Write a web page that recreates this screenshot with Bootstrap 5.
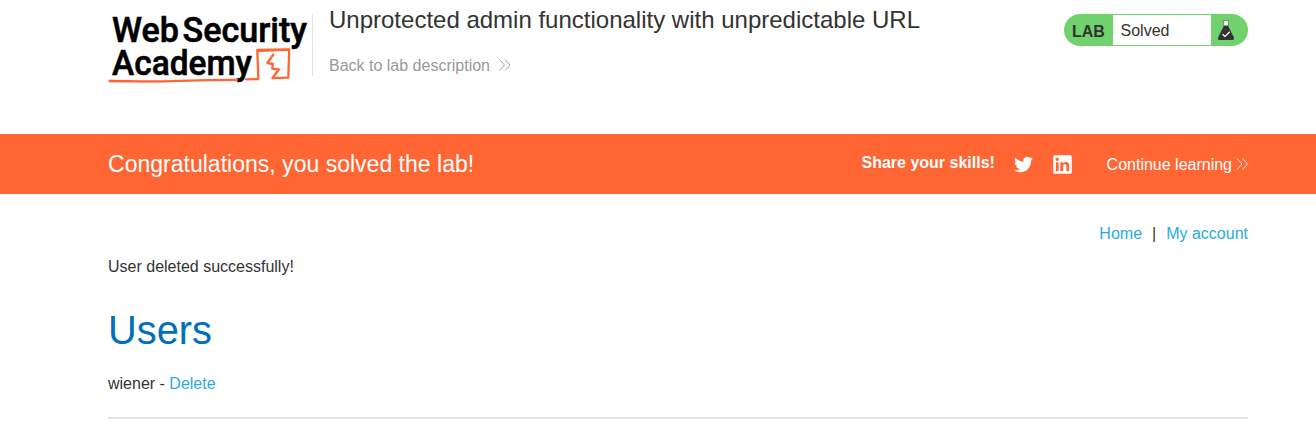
<!DOCTYPE html>
<html lang="en">
<head>
<meta charset="utf-8">
<meta name="viewport" content="width=device-width, initial-scale=1">
<title>Unprotected admin functionality with unpredictable URL</title>
<link href="https://cdn.jsdelivr.net/npm/bootstrap@5.3.0/dist/css/bootstrap.min.css" rel="stylesheet">
<style>
body{font-family:"Liberation Sans",Arial,sans-serif;font-size:16px;line-height:24px;color:#333332;overflow:hidden}
a{color:#29abe2;text-decoration:none}
.page-wrap{width:1140px;margin-left:108px}
.lab-header{height:134px}
.logo{width:204px;height:76px;margin-top:14px}
.logo svg{overflow:visible;display:block}
.rule{width:1px;height:62px;margin-top:14px;background:#e4e4e4}
.lab-title{font-size:24px;line-height:40px}
.back-link{color:#999;margin-top:14px}
.lab-status{width:184px;height:32px;margin-top:14px;background:#70d16d;border-radius:16px;padding:1px 0}
.lab-tag{width:49px;padding-left:8px;line-height:34px}
.lab-state{width:98px;padding-left:7.5px;line-height:31px}
.banner{height:60px;background:#ff6633;color:#fff}
.congrats{font-size:23.04px;line-height:60px}
.share{padding-bottom:2px}
.twitter{margin-left:19px}
.linkedin{margin-left:20px}
.continue{margin-left:34.7px;padding-top:2px}
.top-links{padding-top:28px;gap:10px}
.message{margin-top:9px}
.users-title{font-size:39.8px;line-height:48px;color:#0070ba;margin-top:27px}
.user-row{margin-top:18px}
.list-end{height:2px;background:#e4e4e4;margin-top:21px}
</style>
</head>
<body>
<header class="lab-header">
  <div class="page-wrap d-flex align-items-start">
    <a class="logo flex-shrink-0" href="#" aria-label="Web Security Academy">
      <svg width="204" height="76" viewBox="108 14 204 76">
        <g font-family="Roboto, sans-serif" font-weight="500" font-size="35.8" fill="#000" stroke="#000" stroke-width=".6">
          <text x="112" y="41.900" textLength="67" lengthAdjust="spacingAndGlyphs">Web</text>
          <text x="182.500" y="41.900" textLength="124.500" lengthAdjust="spacingAndGlyphs">Security</text>
          <text x="112" y="74.800" textLength="140" lengthAdjust="spacingAndGlyphs">Academy</text>
        </g>
        <g fill="none" stroke="#ff6633" stroke-linejoin="round" stroke-linecap="round">
          <path d="M109.500 81Q150 81.800 180 80.800T237 79.900M246 79.300L258.300 79L257.300 50L289.200 49.300L288.300 77.600L272.400 78.200L278.800 69.500L272.300 68.600L272.800 64L267.300 63L273.300 54.500" stroke-width="2.300"/>
          <path d="M110 80.300Q140 82.500 165 81.500M258 51.500L288.500 50.500" stroke-width="1"/>
        </g>
      </svg>
    </a>
    <div class="rule"></div>
    <div class="ms-3">
      <div class="lab-title">Unprotected admin functionality with unpredictable URL</div>
      <a class="back-link d-flex align-items-center" href="#">Back to lab description
        <svg class="ms-2" width="14" height="14" fill="none" stroke="#999" stroke-width=".9"><path d="M1.500 .5L6.500 6L1.500 11.500M7 .5L12 6L7 11.500"/></svg>
      </a>
    </div>
    <div class="lab-status d-flex ms-auto">
      <div class="lab-tag fw-bold">LAB</div>
      <div class="lab-state bg-white">Solved</div>
      <svg width="37" height="30" viewBox="1211 15 37 30">
        <path d="M1223.600 25V26.500L1218.200 37.200Q1217.300 40 1220 40H1232Q1234.700 40 1233.800 37.200L1228.400 26.500V25Z" fill="#333332"/>
        <path d="M1224 21H1228V25.500H1224Z" fill="#fff"/>
        <path d="M1222.500 20.500H1229.500M1223.700 21V25.500M1228.300 21V25.500" stroke="#6c8a6b" stroke-width=".8" fill="none"/>
        <path d="M1222.500 34.200L1225 36.500L1229.800 31.800" stroke="#fff" stroke-width="1.200" fill="none"/>
      </svg>
    </div>
  </div>
</header>
<section class="banner">
  <div class="page-wrap d-flex align-items-center h-100">
    <div class="congrats">Congratulations, you solved the lab!</div>
    <div class="share fw-bold ms-auto">Share your skills!</div>
    <svg class="twitter" width="19" height="19" viewBox="0 0 24 24" fill="#fff"><path d="M24 4.600a10 10 0 0 1-2.800.8 5 5 0 0 0 2.100-2.700 10 10 0 0 1-3.100 1.200A4.900 4.900 0 0 0 11.800 8.400 14 14 0 0 1 1.700 3.200a4.900 4.900 0 0 0 1.500 6.600 5 5 0 0 1-2.200-.6 4.900 4.900 0 0 0 3.900 4.900 5 5 0 0 1-2.200.1 4.900 4.900 0 0 0 4.600 3.400A9.900 9.900 0 0 1 0 19.600a14 14 0 0 0 7.500 2.200c9.100 0 14.300-7.700 14-14.600A10 10 0 0 0 24 4.600Z"/></svg>
    <svg class="linkedin" width="19" height="19" viewBox="0 0 24 24"><rect x=".3" y=".3" width="23.400" height="23.400" rx="2" fill="#fff"/><path fill="#ff6633" d="M3.600 9H7.100V20.400H3.600ZM5.300 3.300a2.100 2.100 0 1 1 0 4.200 2.100 2.100 0 0 1 0-4.200ZM9.300 9h3.400v1.600c.5-.9 1.600-1.900 3.400-1.900 3.600 0 4.300 2.400 4.300 5.400v6.300h-3.500v-5.600c0-1.300 0-3-1.900-3s-2.100 1.400-2.100 2.900v5.700H9.300Z"/></svg>
    <a class="continue text-white d-flex align-items-center" href="#">Continue learning
      <svg class="ms-1" width="12" height="14" overflow="visible" fill="none" stroke="#fff" stroke-width=".9"><path d="M1 .5L6 6L1 11.500M6.500 .5L11.500 6L6.500 11.500"/></svg>
    </a>
  </div>
</section>
<main class="page-wrap">
  <nav class="top-links d-flex justify-content-end">
    <a href="#">Home</a><span>|</span><a href="#">My account</a>
  </nav>
  <p class="message mb-0">User deleted successfully!</p>
  <h1 class="users-title fw-normal mb-0">Users</h1>
  <div class="user-row">wiener - <a href="#">Delete</a></div>
  <div class="list-end"></div>
</main>
<script src="https://cdn.jsdelivr.net/npm/bootstrap@5.3.0/dist/js/bootstrap.bundle.min.js"></script>
</body>
</html>
